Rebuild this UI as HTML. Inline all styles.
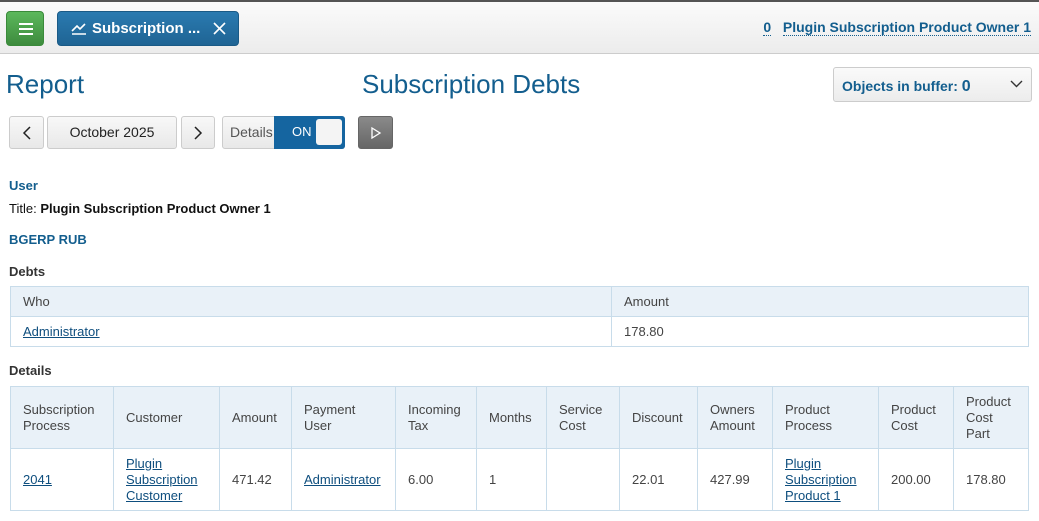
<!DOCTYPE html>
<html><head><style>
*{box-sizing:border-box}
body{margin:0;width:1039px;height:521px;overflow:hidden;font-family:"Liberation Sans",sans-serif;background:#fff;color:#333;font-size:13px}
.top{position:absolute;left:0;top:0;width:1039px;height:54px;background:linear-gradient(#fbfbfb,#ececec);border-top:2px solid #555;border-bottom:1px solid #ccc}
.menu{position:absolute;left:6px;top:9px;width:38px;height:35px;background:linear-gradient(#5cb85c,#3d8b3d);border:1px solid #3a8a3a;border-radius:4px}
.menu i{position:absolute;left:12px;width:14px;height:2px;background:#fff}
.tab{position:absolute;left:57px;top:9px;width:182px;height:35px;background:linear-gradient(#2a7ab0,#1f6494);border:1px solid #1a5a86;border-radius:4px;color:#fff;font-weight:bold;font-size:15px;line-height:33px;padding-left:34px}
.usr{position:absolute;right:8px;top:17px;color:#135e8e;font-weight:bold;font-size:14px}
.usr span{border-bottom:1px dotted #135e8e}
.h{position:absolute;color:#135e8e;font-size:26px}
.buf{position:absolute;left:833px;top:67px;width:199px;height:35px;border:1px solid #ccc;border-radius:3px;background:linear-gradient(#fafafa,#ececec);color:#135e8e;font-weight:bold;font-size:14px;line-height:36px;padding-left:8px}
.btn{position:absolute;top:116px;height:33px;border:1px solid #ccc;border-radius:3px;background:linear-gradient(#f8f8f8,#e8e8e8);text-align:center;line-height:31px;font-size:14px;color:#222}
.lbl{position:absolute;left:9px;font-weight:bold;font-size:13px}
table{position:absolute;left:10px;border-collapse:collapse;width:1019px}
td{border:1px solid #c8dcea;padding:0 12px;color:#444;font-size:13px;line-height:16px}
tr.hd td{background:#e9f1f8}
a{color:#0e4e7e;text-decoration:underline}
</style></head><body>
<div class="top">
<div class="menu"><i style="top:11px"></i><i style="top:16px"></i><i style="top:21px"></i></div>
<div class="tab"><svg style="position:absolute;left:13px;top:10px" width="16" height="13"><path d="M1 9 L6 4 L9 7 L14 2" stroke="#fff" stroke-width="1.6" fill="none"/><path d="M1 12 H15" stroke="#fff" stroke-width="1.5"/></svg>Subscription ...<svg style="position:absolute;left:155px;top:10px" width="13" height="13"><path d="M1 1 L12 12 M12 1 L1 12" stroke="#fff" stroke-width="1.6"/></svg></div>
<div class="usr"><span>0</span>&nbsp;&nbsp;&nbsp;<span>Plugin Subscription Product Owner 1</span></div>
</div>
<div class="h" style="left:6px;top:69px">Report</div>
<div class="h" style="left:362px;top:69px">Subscription Debts</div>
<div class="buf">Objects in buffer: <span style="font-size:16px">0</span><svg style="position:absolute;right:8px;top:12px" width="13" height="8"><path d="M1 1 L6.5 6.5 L12 1" stroke="#333" stroke-width="1.4" fill="none"/></svg></div>
<div class="btn" style="left:9px;width:35px"><svg width="10" height="14" style="margin-top:9px"><path d="M8 1 L2 7 L8 13" stroke="#222" stroke-width="1.5" fill="none"/></svg></div>
<div class="btn" style="left:47px;width:130px">October 2025</div>
<div class="btn" style="left:181px;width:34px"><svg width="10" height="14" style="margin-top:9px"><path d="M2 1 L8 7 L2 13" stroke="#222" stroke-width="1.5" fill="none"/></svg></div>
<div class="btn" style="left:222px;width:123px;text-align:left;padding-left:7px;color:#555">Details
<div style="position:absolute;left:51px;top:-1px;width:71px;height:33px;background:#1565a0;border-radius:0 3px 3px 0;color:#fff;font-size:13px;padding-left:18px">ON<div style="position:absolute;right:3px;top:3px;width:26px;height:26px;background:#f4f4f4;border-radius:3px"></div></div></div>
<div class="btn" style="left:358px;width:35px;background:linear-gradient(#8a8a8a,#666);border-color:#666;color:#fff"><svg width="12" height="12" style="margin-top:10px"><path d="M2 1 L10 6 L2 11 Z" stroke="#fff" stroke-width="1.3" fill="none"/></svg></div>
<div class="lbl" style="top:178px;color:#135e8e">User</div>
<div style="position:absolute;left:9px;top:201px;font-size:13px;color:#111">Title: <b>Plugin Subscription Product Owner 1</b></div>
<div class="lbl" style="top:232px;color:#135e8e">BGERP RUB</div>
<div class="lbl" style="top:264px;color:#333">Debts</div>
<table style="top:286px">
<tr class="hd" style="height:30px"><td style="width:601px">Who</td><td>Amount</td></tr>
<tr style="height:30px"><td><a>Administrator</a></td><td>178.80</td></tr>
</table>
<div class="lbl" style="top:363px;color:#333">Details</div>
<table style="top:386px">
<tr class="hd" style="height:62px"><td style="width:103px">Subscription Process</td><td style="width:106px">Customer</td><td style="width:72px">Amount</td><td style="width:104px">Payment User</td><td style="width:81px">Incoming Tax</td><td style="width:70px">Months</td><td style="width:73px">Service Cost</td><td style="width:78px">Discount</td><td style="width:75px">Owners Amount</td><td style="width:106px">Product Process</td><td style="width:75px">Product Cost</td><td>Product Cost Part</td></tr>
<tr style="height:62px"><td><a>2041</a></td><td><a>Plugin Subscription Customer</a></td><td>471.42</td><td><a>Administrator</a></td><td>6.00</td><td>1</td><td></td><td>22.01</td><td>427.99</td><td><a>Plugin Subscription Product 1</a></td><td>200.00</td><td>178.80</td></tr>
</table>
</body></html>
